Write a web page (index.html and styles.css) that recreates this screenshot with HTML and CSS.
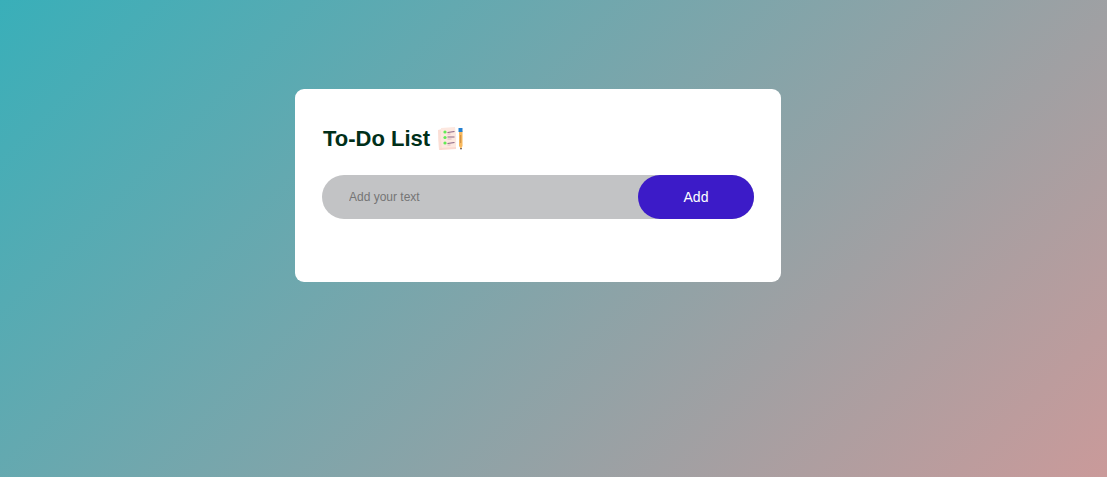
FILE: index.html
```html
<!DOCTYPE html>
<html lang="en">
<head>
<meta charset="utf-8">
<meta name="viewport" content="width=device-width, initial-scale=1">
<title>To-Do List</title>
<link rel="stylesheet" href="styles.css">
</head>
<body>
<main class="container">
  <section class="todo-app">
    <h2 class="title">To-Do List
      <svg class="title-icon" viewBox="0 0 27 27" aria-hidden="true">
        <path d="M1 5 5 4V25H2Q1 14 1 5Z" fill="#fbdfd6"/>
        <path d="M4 3 18 2Q20 12 19 23L5 24Q3 13 4 3Z" fill="#fde8e0"/>
        <path d="M3 23 19 22V24L3 25Z" fill="#fbd9d0"/>
        <g fill="#62ec55"><circle cx="8" cy="7" r="1.600"/><circle cx="8" cy="12.500" r="1.600"/><circle cx="8" cy="18" r="1.600"/></g>
        <path d="M10.500 7.500 17.500 6.500M10.500 12H17.500M10.500 18.500 17.500 17.500" stroke="#8b6685" stroke-width="1.200"/>
        <path d="M10.500 9H13.500M10.500 14H14.500M10.500 20H13.500" stroke="#d8afb9" stroke-width=".8"/>
        <path d="M22 6H25.500V21L24 24 22 21Z" fill="#f8b85c"/>
        <path d="M21.500 3H25.500V7H21.500Z" fill="#237fd0"/>
        <path d="M23.700 10V18" stroke="#c98a40"/>
        <path d="M23 23H25L24 25Z" fill="#584540"/>
      </svg>
    </h2>
    <form class="row">
      <input class="task-input" type="text" placeholder="Add your text" aria-label="Task">
      <button class="add-button" type="button">Add</button>
    </form>
  </section>
</main>
</body>
</html>
```
FILE: styles.css
```css
* {
  box-sizing: border-box;
  margin: 0;
  padding: 0;
  font-family: "Liberation Sans", Arial, sans-serif;
}

.container {
  min-height: 100vh;
  padding: 89px 40px 18px 9px;
  background: linear-gradient(135deg, #39afb9, #ca9a9a);
}

.todo-app {
  max-width: 486px;
  margin: 0 auto;
  padding: 36px 27px 63px;
  border-radius: 9px;
  background: #fff;
}

.title {
  display: flex;
  align-items: center;
  gap: 7px;
  margin-bottom: 23px;
  padding-left: 1px;
  color: #002f19;
  font-size: 22px;
  line-height: 27px;
}

.title-icon {
  width: 27px;
  height: 27px;
}

.row {
  display: flex;
  align-items: center;
  border-radius: 27px;
  background: #c2c3c5;
}

.task-input {
  flex: 1;
  min-width: 0;
  padding: 9px 9px 9px 27px;
  border: 0;
  outline: 0;
  background: transparent;
  font-size: 12px;
}

.task-input::placeholder {
  color: #757575;
}

.add-button {
  min-width: 116px;
  padding: 14px 45px;
  border: 0;
  border-radius: 36px;
  background: #3c1bc8;
  color: #fff;
  font-size: 14px;
  line-height: 16px;
  cursor: pointer;
}
```
